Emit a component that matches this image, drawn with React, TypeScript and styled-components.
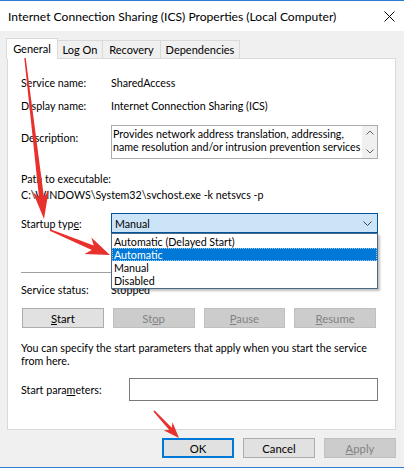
import React from "react";
import styled, { createGlobalStyle } from "styled-components";

const Global = createGlobalStyle`
  html, body { margin: 0; padding: 0; background: #f0f0f0; }
  body { font-family: Lato, "Noto Sans", "Liberation Sans", sans-serif; }
`;

const Window = styled.div`
  position: relative;
  width: 404px;
  height: 468px;
  box-sizing: border-box;
  background: #f0f0f0;
  border-top: 1px solid #2b7cd3;
  border-bottom: 1px solid #2b7cd3;
  display: flex;
  flex-direction: column;
  font-size: 10.7px;
  color: #000;
  overflow: hidden;
`;

const TitleBar = styled.div`
  height: 30px;
  flex: none;
  background: #fff;
  display: flex;
  align-items: center;
  justify-content: space-between;
  padding: 0 9px 0 8px;
  font-size: 12.1px;
`;

const TabStrip = styled.div`
  margin-top: 7px;
  height: 20px;
  display: flex;
  align-items: flex-end;
  padding-left: 6px;
  position: relative;
  z-index: 2;
`;

const Tab = styled.div<{ $w: number; $active?: boolean }>`
  width: ${(p) => p.$w}px;
  box-sizing: border-box;
  height: ${(p) => (p.$active ? 21 : 18)}px;
  margin-bottom: ${(p) => (p.$active ? -1 : 0)}px;
  margin-right: -1px;
  background: ${(p) => (p.$active ? "#fff" : "#f0f0f0")};
  border: 1px solid #d9d9d9;
  border-bottom: none;
  display: flex;
  align-items: center;
  justify-content: center;
  font-size: 11px;
  padding-bottom: ${(p) => (p.$active ? 2 : 0)}px;
  position: relative;
  z-index: ${(p) => (p.$active ? 2 : 1)};
`;

const Panel = styled.div`
  margin: 0 8px 0 7px;
  height: 372px;
  box-sizing: border-box;
  background: #fff;
  border: 1px solid #d9d9d9;
  padding: 0 17px 0 13px;
  display: flex;
  flex-direction: column;
  position: relative;
  z-index: 1;
`;

const Row = styled.div<{ $mt: number; $center?: boolean }>`
  display: flex;
  align-items: ${(p) => (p.$center ? "center" : "flex-start")};
  line-height: 13px;
  margin-top: ${(p) => p.$mt}px;
`;

const Label = styled.div<{ $w?: number; $mt?: number }>`
  width: ${(p) => p.$w ?? 90}px;
  flex: none;
  margin-top: ${(p) => p.$mt ?? 0}px;
  white-space: nowrap;
`;

const Value = styled.div`
  white-space: nowrap;
`;

const Line = styled.div<{ $mt: number }>`
  line-height: 13px;
  margin-top: ${(p) => p.$mt}px;
  white-space: nowrap;
`;

const MultiBox = styled.div`
  flex: 1;
  height: 34px;
  box-sizing: border-box;
  border: 1px solid #ababab;
  display: flex;
`;

const MultiText = styled.div`
  flex: 1;
  padding: 1px 0 0 1px;
  line-height: 13px;
  white-space: nowrap;
  overflow: hidden;
`;

const ScrollBar = styled.div`
  width: 15px;
  flex: none;
  background: #f0f0f0;
  display: flex;
  flex-direction: column;
  justify-content: space-between;
  align-items: center;
  padding: 4px 0 4px;
`;

const ComboWrap = styled.div`
  flex: 1;
  position: relative;
`;

const Combo = styled.div`
  height: 20px;
  box-sizing: border-box;
  background: #cce4f7;
  border: 1px solid #005499;
  display: flex;
  align-items: center;
  justify-content: space-between;
  padding: 0 5px 0 3px;
`;

const DropList = styled.div`
  position: absolute;
  left: 0;
  right: 0;
  top: 100%;
  box-sizing: border-box;
  background: #fff;
  border: 1px solid #4a6a8a;
  padding: 1px 0;
  box-shadow: 2px 2px 2px rgba(0, 0, 0, 0.25);
  z-index: 5;
`;

const DropItem = styled.div<{ $sel?: boolean }>`
  height: 13px;
  line-height: 13px;
  padding-left: 2px;
  background: ${(p) => (p.$sel ? "#0078d7" : "transparent")};
  color: ${(p) => (p.$sel ? "#fff" : "#000")};
  outline: ${(p) => (p.$sel ? "1px dotted #9cc8ef" : "none")};
  outline-offset: -1px;
`;

const Separator = styled.div<{ $mt: number }>`
  height: 1px;
  background: #a0a0a0;
  margin-top: ${(p) => p.$mt}px;
`;

const ButtonRow = styled.div<{ $mt: number }>`
  display: grid;
  grid-template-columns: repeat(4, 1fr);
  column-gap: 9px;
  margin: ${(p) => p.$mt}px 2px 0 1px;
`;

const Btn = styled.div<{ $disabled?: boolean; $default?: boolean; $w?: number }>`
  height: 20px;
  ${(p) => (p.$w ? `width: ${p.$w}px;` : "")}
  box-sizing: border-box;
  display: flex;
  align-items: center;
  justify-content: center;
  background: ${(p) => (p.$disabled ? "#cccccc" : "#e1e1e1")};
  border: ${(p) =>
    p.$default ? "2px solid #0078d7" : p.$disabled ? "1px solid #bfbfbf" : "1px solid #adadad"};
  color: ${(p) => (p.$disabled ? "#838383" : "#000")};
  font-size: 11.3px;
`;

const Para = styled.div<{ $mt: number }>`
  margin-top: ${(p) => p.$mt}px;
  line-height: 12.5px;
`;

const InputBox = styled.div`
  flex: 1;
  height: 23px;
  box-sizing: border-box;
  border: 1px solid #7a7a7a;
  background: #fff;
`;

const Footer = styled.div`
  display: flex;
  justify-content: flex-end;
  gap: 9px;
  padding: 8px 8px 0 0;
`;

const Overlay = styled.svg`
  position: absolute;
  left: 0;
  top: 0;
  pointer-events: none;
  z-index: 10;
`;

type P = [number, number];
function arrow(tail: P, tip: P, tailW: number, shaftW: number, headLen: number, headW: number) {
  const dx = tip[0] - tail[0];
  const dy = tip[1] - tail[1];
  const L = Math.hypot(dx, dy);
  const d: P = [dx / L, dy / L];
  const n: P = [-d[1], d[0]];
  const at = (base: P, along: number, side: number): P => [
    base[0] + d[0] * along + n[0] * side,
    base[1] + d[1] * along + n[1] * side,
  ];
  const pts: P[] = [
    at(tail, 0, tailW / 2),
    at(tip, -headLen * 0.78, shaftW / 2),
    at(tip, -headLen, headW / 2),
    tip,
    at(tip, -headLen, -headW / 2),
    at(tip, -headLen * 0.78, -shaftW / 2),
    at(tail, 0, -tailW / 2),
  ];
  return pts.map((p) => `${p[0].toFixed(1)},${p[1].toFixed(1)}`).join(" ");
}

const Chevron = ({ up }: { up?: boolean }) => (
  <svg width="8" height="5" viewBox="0 0 8 5">
    <path
      d={up ? "M0.5 4.5 L4 1 L7.5 4.5" : "M0.5 0.5 L4 4 L7.5 0.5"}
      fill="none"
      stroke="#606060"
      strokeWidth="1"
    />
  </svg>
);

export default function App() {
  return (
    <>
      <Global />
      <Window>
        <TitleBar>
          <span>Internet Connection Sharing (ICS) Properties (Local Computer)</span>
          <svg width="11" height="11" viewBox="0 0 11 11">
            <path d="M0.5 0.5 L10.5 10.5 M10.5 0.5 L0.5 10.5" stroke="#000" strokeWidth="1" />
          </svg>
        </TitleBar>
        <TabStrip>
          <Tab $w={52} $active>General</Tab>
          <Tab $w={46}>Log On</Tab>
          <Tab $w={59}>Recovery</Tab>
          <Tab $w={80}>Dependencies</Tab>
        </TabStrip>
        <Panel>
          <Row $mt={17}>
            <Label>Service name:</Label>
            <Value>SharedAccess</Value>
          </Row>
          <Row $mt={10}>
            <Label>Display name:</Label>
            <Value>Internet Connection Sharing (ICS)</Value>
          </Row>
          <Row $mt={13}>
            <Label $mt={6}>Description:</Label>
            <MultiBox>
              <MultiText>
                Provides network address translation, addressing,
                <br />
                name resolution and/or intrusion prevention services
              </MultiText>
              <ScrollBar>
                <Chevron up />
                <Chevron />
              </ScrollBar>
            </MultiBox>
          </Row>
          <Line $mt={13}>Path to executable:</Line>
          <Line $mt={3}>C:\WINDOWS\System32\svchost.exe -k netsvcs -p</Line>
          <Row $mt={12} $center>
            <Label>
              Startup typ<u>e</u>:
            </Label>
            <ComboWrap>
              <Combo>
                <span>Manual</span>
                <svg width="9" height="5" viewBox="0 0 9 5">
                  <path d="M0.5 0.5 L4.5 4.5 L8.5 0.5" fill="none" stroke="#404040" strokeWidth="1" />
                </svg>
              </Combo>
              <DropList>
                <DropItem>Automatic (Delayed Start)</DropItem>
                <DropItem $sel>Automatic</DropItem>
                <DropItem>Manual</DropItem>
                <DropItem>Disabled</DropItem>
              </DropList>
            </ComboWrap>
          </Row>
          <Separator $mt={39} />
          <Row $mt={10}>
            <Label>Service status:</Label>
            <Value>Stopped</Value>
          </Row>
          <ButtonRow $mt={12}>
            <Btn>
              <span>
                <u>S</u>tart
              </span>
            </Btn>
            <Btn $disabled>
              <span>
                St<u>o</u>p
              </span>
            </Btn>
            <Btn $disabled>
              <span>
                <u>P</u>ause
              </span>
            </Btn>
            <Btn $disabled>
              <span>
                <u>R</u>esume
              </span>
            </Btn>
          </ButtonRow>
          <Para $mt={14}>
            You can specify the start parameters that apply when you start the service
            <br />
            from here.
          </Para>
          <Row $mt={11} $center>
            <Label $w={108}>
              Start para<u>m</u>eters:
            </Label>
            <InputBox />
          </Row>
        </Panel>
        <Footer>
          <Btn $w={72} $default>
            OK
          </Btn>
          <Btn $w={72}>Cancel</Btn>
          <Btn $w={72} $disabled>
            <span>
              <u>A</u>pply
            </span>
          </Btn>
        </Footer>
        <Overlay width="404" height="468" viewBox="0 0 404 468">
          <polygon points={arrow([25, 57], [44, 218], 1.5, 5, 28, 16)} fill="#e8302c" />
          <polygon points={arrow([50, 229], [110, 254], 1.5, 5, 24, 18)} fill="#e8302c" />
          <polygon points={arrow([154, 410], [179, 437], 1.5, 3.5, 16, 12)} fill="#e8302c" />
        </Overlay>
      </Window>
    </>
  );
}
